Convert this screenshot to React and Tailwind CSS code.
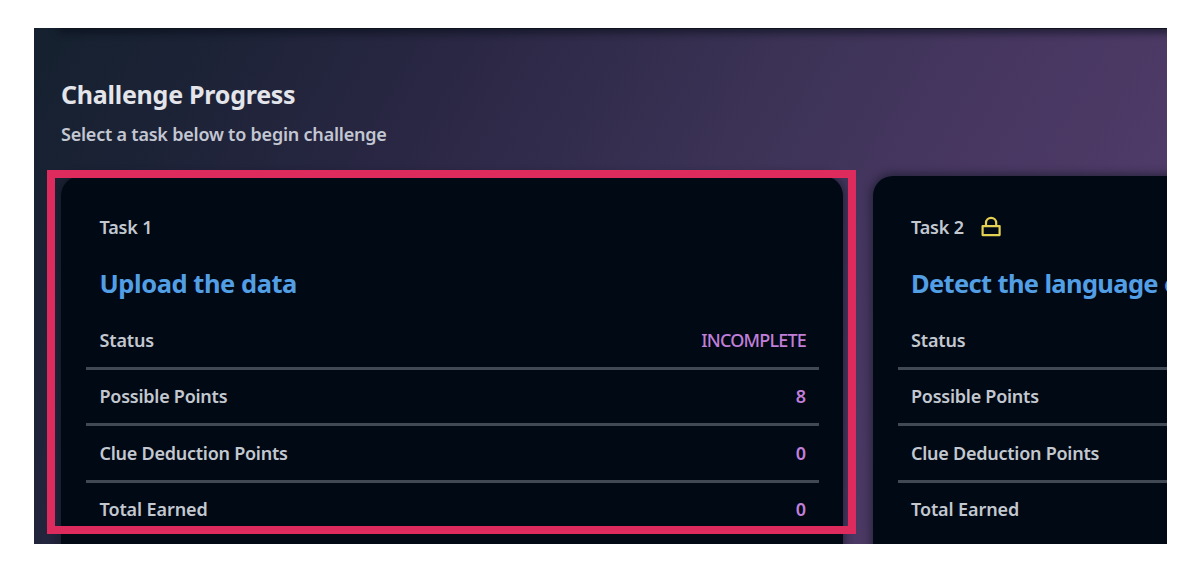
import React from "react";

function LockIcon() {
  return (
    <svg className="ml-[17px] h-[22px] w-[20px]" viewBox="0 0 20 22" fill="none" stroke="#e4d052" strokeWidth="2.2" strokeLinejoin="round">
      <path d="M1.6 10.1h17v9h-17z" />
      <path d="M5 10V7a5.1 5.1 0 0 1 10.2 0v3" />
    </svg>
  );
}

function Row({ label, spacing, value, valueSpacing, last }) {
  return (
    <div className={`flex h-[56.4px] shrink-0 items-center justify-between pr-[12.5px] pl-[13.5px] ${last ? "pb-[4px]" : "border-b-[3px] border-[#414955] pb-[1px]"}`}>
      <span className={`text-[#c3c8d0] ${spacing}`}>{label}</span>
      <span className={`text-[#c17fd9] ${valueSpacing}`}>{value}</span>
    </div>
  );
}

function TaskCard({ task, locked, title, titleSpacing, status }) {
  return (
    <section className="h-[420px] w-[782px] shrink-0 rounded-[20px] bg-[#000914] px-[25px] pt-[37px] shadow-[0_0_9px_2px_rgba(16,22,34,0.6)]">
      <div className="flex h-[28px] items-center pl-[13.5px] text-[#c3c8d0]">
        <span className="w-[53px] tracking-[-0.15px]">{task}</span>
        {locked && <LockIcon />}
      </div>
      <h3 className={`mt-[23px] h-[38px] pl-[13.5px] text-[25.5px] leading-[38px] font-bold whitespace-nowrap text-[#539fe5] ${titleSpacing}`}>{title}</h3>
      <div className="mt-[11.6px] -mr-[0.5px] flex flex-col">
        <Row label="Status" spacing="tracking-[-0.15px]" value={status} valueSpacing="font-medium tracking-[-0.8px]" />
        <Row label="Possible Points" spacing="tracking-[-0.25px]" value="8" valueSpacing="tracking-[0px]" />
        <Row label="Clue Deduction Points" spacing="tracking-[-0.25px]" value="0" valueSpacing="tracking-[0px]" />
        <Row label="Total Earned" spacing="tracking-[-0.1px]" value="0" valueSpacing="tracking-[0px]" last />
      </div>
    </section>
  );
}

export default function App() {
  return (
    <div className="h-[567px] w-[1202px] overflow-hidden bg-white pt-[28px] pl-[34px] font-['Noto_Sans',sans-serif] text-[18px] leading-[28px] font-semibold">
      <main className="relative h-[516px] w-[1133px] overflow-hidden bg-[linear-gradient(120deg,#15212f_0%,#1b2235_11%,#2a2744_31%,#3b3255_53%,#45365f_67%,#4d3a66_82%,#5b4175_100%)]">
        <div className="ml-[27px] h-[1px] w-[1200px] rounded-b-[20px] bg-[#0d1420] shadow-[0_0_9px_3px_rgba(8,14,24,0.8)]" />
        <header className="h-[147px] pt-[46.5px] pl-[27px]">
          <h2 className="h-[36px] text-[25px] leading-[36px] font-bold tracking-[-0.25px] text-[#e3e5ea]">Challenge Progress</h2>
          <p className="mt-[8px] tracking-[-0.22px] text-[#c3c7d2]">Select a task below to begin challenge</p>
        </header>
        <div className="flex gap-[29.5px] pl-[27px]">
          <TaskCard task="Task 1" title="Upload the data" titleSpacing="tracking-[-0.45px]" status="INCOMPLETE" />
          <TaskCard task="Task 2" locked title="Detect the language of the text" titleSpacing="tracking-[-0.65px]" status="LOCKED" />
        </div>
        <div className="absolute top-[142px] left-[13px] h-[364px] w-[809px] border-8 border-[#de2b5e]" />
      </main>
    </div>
  );
}
